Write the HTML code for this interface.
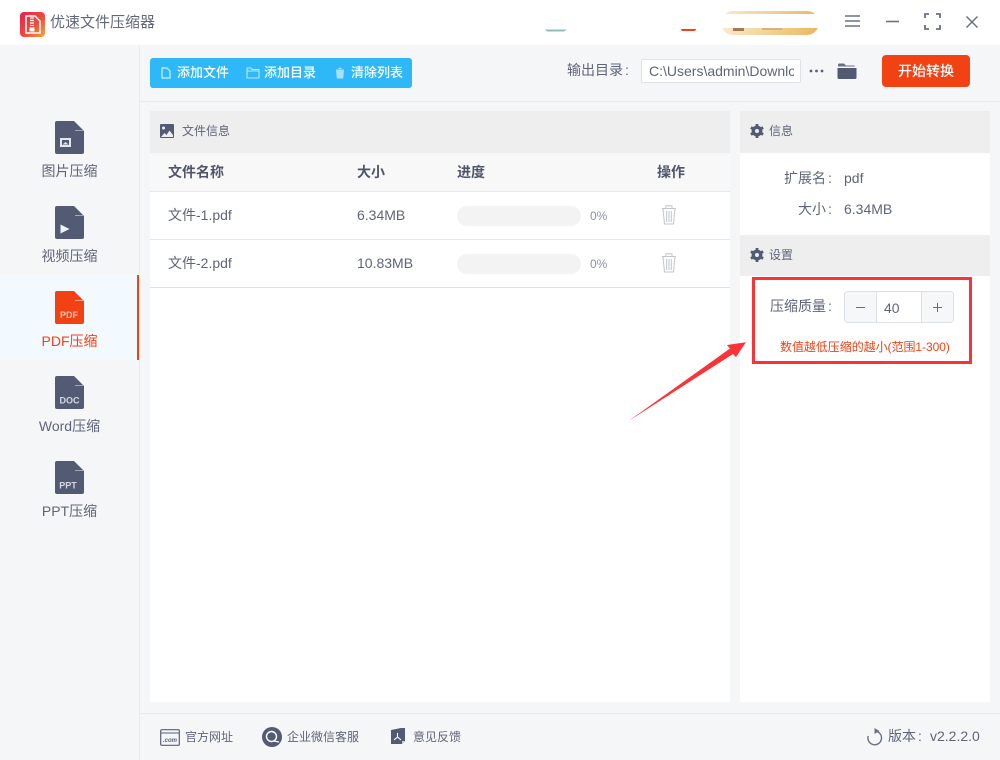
<!DOCTYPE html>
<html lang="zh-CN"><head><meta charset="utf-8"><title>优速文件压缩器</title>
<style>
html,body{margin:0;padding:0}
body{width:1000px;height:760px;overflow:hidden;position:relative;background:#f5f6f8;font-family:"Liberation Sans","Noto Sans CJK SC",sans-serif;color:#5f6579;font-size:14px}
.a{position:absolute}
.t{position:absolute;white-space:nowrap;line-height:20px}
.c{margin-left:2px}
svg{position:absolute;display:block}
</style></head><body>
<!-- title bar -->
<div class="a" style="left:0;top:0;width:1000px;height:45px;background:#fff"></div>
<svg style="left:20px;top:12px" width="25" height="25" viewBox="0 0 25 25"><defs><linearGradient id="lg" x1="0" y1="0" x2="1" y2="1"><stop offset="0" stop-color="#e8204f"/><stop offset=".55" stop-color="#ef4a3c"/><stop offset="1" stop-color="#f8a83a"/></linearGradient></defs><rect width="25" height="25" rx="4" fill="url(#lg)"/><path d="M6 4h9l5 5v12H6z" fill="none" stroke="#fff" stroke-width="1.5"/><path d="M10 6h4M10 8.500h4M10 11h4M10 13.500h4" stroke="#fff" stroke-width="1.300"/><rect x="9.500" y="15.500" width="5" height="4" fill="#fff"/></svg>
<div class="t" style="left:50px;top:13px;font-size:15px;color:#62687b">优速文件压缩器</div>
<!-- partially hidden ad strip -->
<svg style="left:544px;top:28px" width="26" height="5" viewBox="0 0 26 5"><path d="M1 1.500h22l-3 2H3z" fill="#8dbcbb"/></svg>
<div class="a" style="left:681px;top:29px;width:15px;height:2px;background:#f0431a;border-radius:0 0 8px 8px"></div>
<div class="a" style="left:721px;top:11px;width:98px;height:24px;border-radius:12px;background:linear-gradient(90deg,#fbeacb,#e9b85f)"></div>
<div class="a" style="left:721px;top:14px;width:98px;height:14px;background:#fff"></div>
<div class="a" style="left:733px;top:28px;width:11px;height:3px;background:#a07a55"></div>
<div class="a" style="left:762px;top:28px;width:20px;height:2px;background:#d9b17a"></div>
<svg style="left:844px;top:14px" width="17" height="14" viewBox="0 0 17 14"><path d="M1 2h15M1 7h15M1 12h15" stroke="#6a7187" stroke-width="1.500"/></svg>
<svg style="left:885px;top:20px" width="16" height="3" viewBox="0 0 16 3"><path d="M1 1.500h13" stroke="#6a7187" stroke-width="1.600"/></svg>
<svg style="left:924px;top:13px" width="17" height="17" viewBox="0 0 17 17"><path d="M1 5V1h4M12 1h4v4M16 12v4h-4M5 16H1v-4" fill="none" stroke="#6a7187" stroke-width="1.800"/></svg>
<svg style="left:965px;top:15px" width="14" height="14" viewBox="0 0 14 14"><path d="M1.500 1.500l11 11M12.500 1.500l-11 11" stroke="#6a7187" stroke-width="1.500"/></svg>
<!-- structure lines -->
<div class="a" style="left:139px;top:45px;width:1px;height:715px;background:#e9ebee"></div>
<div class="a" style="left:140px;top:101px;width:860px;height:1px;background:#e9ebee"></div>
<div class="a" style="left:140px;top:713px;width:860px;height:1px;background:#e9ebee"></div>
<!-- toolbar -->
<div class="a" style="left:150px;top:58px;width:262px;height:30px;background:#2eb8f8;border-radius:3px"></div>
<svg style="left:161px;top:67px" width="10" height="12" viewBox="0 0 10 12"><path d="M1 1h5l3 3v7H1z" fill="none" stroke="#cdeefd" stroke-width="1.200"/></svg>
<div class="t" style="left:177px;top:63px;color:#fff;font-weight:500;font-size:13px">添加文件</div>
<svg style="left:246px;top:67px" width="14" height="12" viewBox="0 0 14 12"><path d="M1 2V1h4l1 1.500h7V11H1zM1 4h12" fill="none" stroke="#bfe9fd" stroke-width="1.100"/></svg>
<div class="t" style="left:264px;top:63px;color:#fff;font-weight:500;font-size:13px">添加目录</div>
<svg style="left:335px;top:67px" width="10" height="12" viewBox="0 0 10 12"><path d="M1 2.500h8l-.8 9H1.800zM3.500 2V.8h3V2" fill="#a8dffb"/></svg>
<div class="t" style="left:351px;top:63px;color:#fff;font-weight:500;font-size:13px">清除列表</div>
<div class="t" style="left:567px;top:60px">输出目录<span class="c">:</span></div>
<div class="a" style="left:641px;top:59px;width:160px;height:24px;box-sizing:border-box;border:1px solid #dfe2e6;border-radius:2px;background:#fff;overflow:hidden"><span class="t" style="left:7px;top:1px">C:\Users\admin\Downloads</span><div class="a" style="right:0;top:0;width:6px;height:22px;background:#fff"></div></div>
<svg style="left:809px;top:69px" width="15" height="4" viewBox="0 0 15 4"><circle cx="2" cy="2" r="1.400" fill="#586075"/><circle cx="7.500" cy="2" r="1.400" fill="#586075"/><circle cx="13" cy="2" r="1.400" fill="#586075"/></svg>
<svg style="left:837px;top:62px" width="20" height="18" viewBox="0 0 20 18"><path d="M1 3q0-1.500 1.500-1.500h4.500l2 2h8q1 0 1 1H1z" fill="#6a7187"/><path d="M.5 6h19v9.500q0 1.500-1.500 1.500H2q-1.500 0-1.500-1.500z" fill="#525a72"/></svg>
<div class="a" style="left:882px;top:55px;width:88px;height:32px;background:#f24214;border-radius:4px;color:#fff;text-align:center;line-height:32px;font-weight:500">开始转换</div>
<!-- sidebar -->
<div class="a" style="left:0;top:275px;width:137px;height:85px;background:#f3faff"></div>
<div class="a" style="left:137px;top:275px;width:2px;height:85px;background:#f24214"></div>

<svg style="left:55px;top:121px" width="29" height="33" viewBox="0 0 29 33"><path d="M2 0h17l10 10v21a2 2 0 0 1-2 2H2a2 2 0 0 1-2-2V2a2 2 0 0 1 2-2z" fill="#535b74"/><path d="M20 9.500h8" stroke="#b6bbc8" stroke-width=".8"/><rect x="5" y="17" width="11" height="9" fill="#e6e7ec"/><rect x="7" y="19" width="7" height="5" fill="#535b74"/><path d="M7.500 23.500l3-2.500 3 2.500z" fill="#e6e7ec"/></svg>
<div class="t" style="left:0;top:161px;width:139px;text-align:center">图片压缩</div>

<svg style="left:55px;top:206px" width="29" height="33" viewBox="0 0 29 33"><path d="M2 0h17l10 10v21a2 2 0 0 1-2 2H2a2 2 0 0 1-2-2V2a2 2 0 0 1 2-2z" fill="#535b74"/><path d="M20 9.500h8" stroke="#b6bbc8" stroke-width=".8"/><path d="M5.500 18.500l9 4.500-9 4.500z" fill="#f1f2f5"/></svg>
<div class="t" style="left:0;top:246px;width:139px;text-align:center">视频压缩</div>

<svg style="left:55px;top:291px" width="29" height="33" viewBox="0 0 29 33"><path d="M2 0h17l10 10v21a2 2 0 0 1-2 2H2a2 2 0 0 1-2-2V2a2 2 0 0 1 2-2z" fill="#f24214"/><path d="M20 9.500h8" stroke="#fbb9a5" stroke-width=".8"/><text x="14" y="27" text-anchor="middle" font-family="Liberation Sans" font-size="9" font-weight="700" fill="#fbc4b2">PDF</text></svg>
<div class="t" style="left:0;top:331px;width:139px;text-align:center;color:#f24214">PDF压缩</div>

<svg style="left:55px;top:376px" width="29" height="33" viewBox="0 0 29 33"><path d="M2 0h17l10 10v21a2 2 0 0 1-2 2H2a2 2 0 0 1-2-2V2a2 2 0 0 1 2-2z" fill="#535b74"/><path d="M20 9.500h8" stroke="#b6bbc8" stroke-width=".8"/><text x="14.500" y="27.500" text-anchor="middle" font-family="Liberation Sans" font-size="9" font-weight="700" fill="#d6d8e0">DOC</text></svg>
<div class="t" style="left:0;top:416px;width:139px;text-align:center">Word压缩</div>

<svg style="left:55px;top:461px" width="29" height="33" viewBox="0 0 29 33"><path d="M2 0h17l10 10v21a2 2 0 0 1-2 2H2a2 2 0 0 1-2-2V2a2 2 0 0 1 2-2z" fill="#535b74"/><path d="M20 9.500h8" stroke="#b6bbc8" stroke-width=".8"/><text x="13" y="27.500" text-anchor="middle" font-family="Liberation Sans" font-size="9" font-weight="700" fill="#d6d8e0">PPT</text></svg>
<div class="t" style="left:0;top:501px;width:139px;text-align:center">PPT压缩</div>

<!-- left panel -->
<div class="a" style="left:150px;top:111px;width:580px;height:591px;background:#fff"></div>
<div class="a" style="left:150px;top:111px;width:580px;height:42px;background:#eeeeee"></div>
<svg style="left:160px;top:124px" width="14" height="14" viewBox="0 0 14 14"><rect width="14" height="14" rx="1" fill="#535b74"/><circle cx="3.500" cy="4" r="1.500" fill="#eee"/><path d="M1 13l3.500-4 2 2 3-4.500L13 11v2z" fill="#eee"/></svg>
<div class="t" style="left:182px;top:121px;font-size:12px">文件信息</div>
<div class="a" style="left:150px;top:153px;width:580px;height:38px;background:#f8f8f8"></div>
<div class="a" style="left:150px;top:191px;width:580px;height:1px;background:#e6e7e9"></div>
<div class="a" style="left:150px;top:239px;width:580px;height:1px;background:#e6e7e9"></div>
<div class="a" style="left:150px;top:287px;width:580px;height:1px;background:#e0e1e5"></div>
<div class="t" style="left:168px;top:162px;font-weight:700;color:#4f566b">文件名称</div>
<div class="t" style="left:357px;top:162px;font-weight:700;color:#4f566b">大小</div>
<div class="t" style="left:457px;top:162px;font-weight:700;color:#4f566b">进度</div>
<div class="t" style="left:657px;top:162px;font-weight:700;color:#4f566b">操作</div>

<div class="t" style="left:168px;top:205px">文件-1.pdf</div>
<div class="t" style="left:357px;top:205px">6.34MB</div>
<div class="a" style="left:457px;top:206px;width:124px;height:20px;border-radius:10px;background:#f3f3f3"></div>
<div class="t" style="left:590px;top:206px;font-size:12px;color:#8a90a0">0%</div>
<svg style="left:661px;top:205px" width="16" height="20" viewBox="0 0 16 20"><path d="M1 3.500h14M5 3.500V.8h6v2.700M2 3.500l1.500 15.500h9L14 3.500M5.700 6v11M8 6v11M10.300 6v11" fill="none" stroke="#c0c4ce" stroke-width="1"/></svg>

<div class="t" style="left:168px;top:253px">文件-2.pdf</div>
<div class="t" style="left:357px;top:253px">10.83MB</div>
<div class="a" style="left:457px;top:254px;width:124px;height:20px;border-radius:10px;background:#f3f3f3"></div>
<div class="t" style="left:590px;top:254px;font-size:12px;color:#8a90a0">0%</div>
<svg style="left:661px;top:253px" width="16" height="20" viewBox="0 0 16 20"><path d="M1 3.500h14M5 3.500V.8h6v2.700M2 3.500l1.500 15.500h9L14 3.500M5.700 6v11M8 6v11M10.300 6v11" fill="none" stroke="#c0c4ce" stroke-width="1"/></svg>

<!-- right panel -->
<div class="a" style="left:740px;top:111px;width:250px;height:591px;background:#fff"></div>
<div class="a" style="left:740px;top:111px;width:250px;height:42px;background:#eeeeee"></div>
<svg style="left:750px;top:124px" width="14" height="14" viewBox="0 0 14 14"><circle cx="7" cy="7" r="3.700" fill="none" stroke="#535b74" stroke-width="3.400"/><path d="M7 0v3M7 11v3M.9 3.500l2.600 1.500M10.500 9l2.600 1.500M13.100 3.500l-2.600 1.500M3.500 9l-2.600 1.500" stroke="#535b74" stroke-width="2.800"/></svg>
<div class="t" style="left:769px;top:121px;font-size:12px">信息</div>
<div class="t" style="left:784px;top:168px">扩展名<span class="c">:</span></div>
<div class="t" style="left:844px;top:168px">pdf</div>
<div class="t" style="left:798px;top:199px">大小<span class="c">:</span></div>
<div class="t" style="left:844px;top:199px">6.34MB</div>
<div class="a" style="left:740px;top:235px;width:250px;height:41px;background:#eeeeee"></div>
<svg style="left:750px;top:248px" width="14" height="14" viewBox="0 0 14 14"><circle cx="7" cy="7" r="3.700" fill="none" stroke="#535b74" stroke-width="3.400"/><path d="M7 0v3M7 11v3M.9 3.500l2.600 1.500M10.500 9l2.600 1.500M13.100 3.500l-2.600 1.500M3.500 9l-2.600 1.500" stroke="#535b74" stroke-width="2.800"/></svg>
<div class="t" style="left:769px;top:245px;font-size:12px">设置</div>

<div class="t" style="left:770px;top:296px">压缩质量<span class="c">:</span></div>
<div class="a" style="left:844px;top:291px;width:110px;height:32px;box-sizing:border-box;border:1px solid #dcdfe4;border-radius:4px;background:#fff"></div>
<div class="a" style="left:845px;top:292px;width:32px;height:30px;background:#f6f7f8;border-right:1px solid #dcdfe4;border-radius:3px 0 0 3px;box-sizing:border-box"></div>
<div class="a" style="left:921px;top:292px;width:32px;height:30px;background:#f6f7f8;border-left:1px solid #dcdfe4;border-radius:0 3px 3px 0;box-sizing:border-box"></div>
<div class="a" style="left:856px;top:307px;width:9px;height:1px;background:#666c7e"></div>
<div class="a" style="left:933px;top:307px;width:9px;height:1px;background:#666c7e"></div>
<div class="a" style="left:937px;top:303px;width:1px;height:9px;background:#666c7e"></div>
<div class="t" style="left:884px;top:298px">40</div>
<div class="t" style="left:780px;top:337px;font-size:12px;color:#f24214;letter-spacing:-.05px">数值越低压缩的越小(范围1-300)</div>
<div class="a" style="left:752px;top:277px;width:220px;height:87px;box-sizing:border-box;border:3px solid #fb3336"></div>
<svg style="left:620px;top:335px" width="135" height="95" viewBox="0 0 135 95"><path d="M8.500 86L110 13.500 107 10 126 7.300 116 22 113 19z" fill="#fb3336"/></svg>

<!-- footer -->
<svg style="left:160px;top:729px" width="20" height="17" viewBox="0 0 20 17"><rect x=".7" y=".7" width="18.600" height="15.600" rx="1" fill="none" stroke="#596078" stroke-width="1.200"/><path d="M1 4h18" stroke="#596078"/><text x="10" y="13" text-anchor="middle" font-family="Liberation Sans" font-size="6" font-style="italic" font-weight="700" fill="#596078">.com</text></svg>
<div class="t" style="left:185px;top:727px;font-size:12px">官方网址</div>
<svg style="left:262px;top:727px" width="20" height="20" viewBox="0 0 20 20"><circle cx="10" cy="10" r="10" fill="#535b74"/><circle cx="9.500" cy="9.500" r="5" fill="none" stroke="#fff" stroke-width="1.400"/><path d="M12 14l5 1" stroke="#fff" stroke-width="1.400"/></svg>
<div class="t" style="left:287px;top:727px;font-size:12px">企业微信客服</div>
<svg style="left:391px;top:728px" width="15" height="18" viewBox="0 0 15 18"><path d="M0 2L10 0h4v13l-3 3H0z" fill="#535b74"/><path d="M11 13h3l-3 3z" fill="#c9ccd5"/><path d="M6.500 5v4M3 12l3.500-3 3.500 3" fill="none" stroke="#fff" stroke-width="1.100"/></svg>
<div class="t" style="left:413px;top:727px;font-size:12px">意见反馈</div>
<svg style="left:866px;top:728px" width="17" height="18" viewBox="0 0 17 18"><path d="M9.500 3.200A6.800 6.800 0 1 1 2.200 8" fill="none" stroke="#6a7187" stroke-width="1.400"/><path d="M8.500 0l5 3-5 3z" fill="#6a7187"/></svg>
<div class="t" style="left:888px;top:726px">版本<span class="c">:</span></div>
<div class="t" style="left:930px;top:726px">v2.2.2.0</div>
</body></html>
